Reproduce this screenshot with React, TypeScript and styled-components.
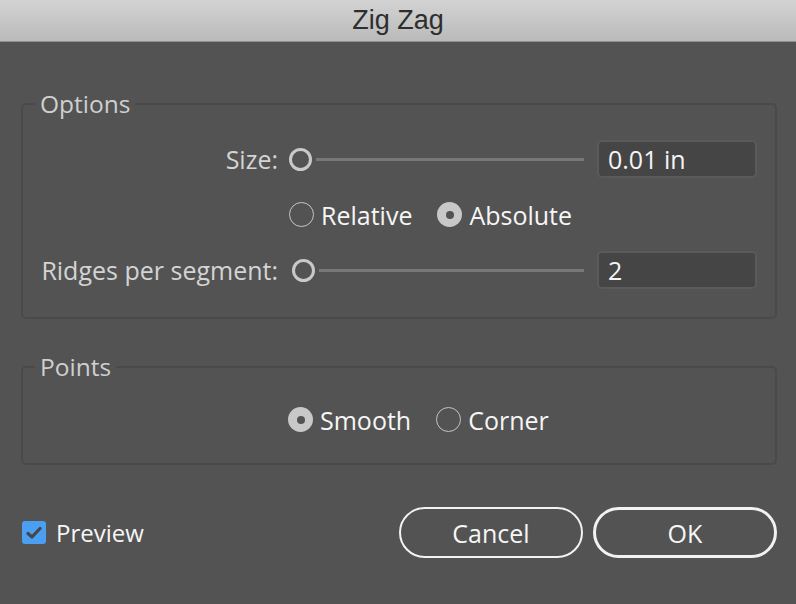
import React from "react";
import styled, { createGlobalStyle } from "styled-components";

const Global = createGlobalStyle`
  html, body { margin: 0; padding: 0; background: #535353; }
  * { box-sizing: border-box; }
`;

const Window = styled.div`
  width: 796px;
  height: 604px;
  display: flex;
  flex-direction: column;
  background: #535353;
  font-family: "Open Sans", "Noto Sans", sans-serif;
  overflow: hidden;
`;

const TitleBar = styled.div`
  height: 42px;
  flex: none;
  display: flex;
  align-items: center;
  justify-content: center;
  background: linear-gradient(#d3d3d3, #bababa);
  border-bottom: 1px solid #8f8f8f;
  font-family: "Liberation Sans", Arial, sans-serif;
  font-size: 27px;
  color: #2e2e2e;
  padding-bottom: 1px;
`;

const Body = styled.div`
  flex: 1;
  display: flex;
  flex-direction: column;
  padding: 0 19px 0 21px;
`;

const Group = styled.fieldset<{ $top: number; $pb: number }>`
  margin: ${(p) => p.$top}px 0 0 0;
  padding: 0 18px ${(p) => p.$pb}px 0;
  border: 2px solid #4a4a4a;
  border-radius: 5px;
  min-width: 0;
`;

const Legend = styled.legend`
  margin-left: 12px;
  padding: 0 5px;
  font-size: 24.5px;
  line-height: 26px;
  color: #cfcfcf;
`;

const Grid = styled.div`
  display: grid;
  grid-template-columns: 1fr 297px 160px;
  column-gap: 11px;
  row-gap: 24px;
  align-items: center;
  padding-top: 23px;
`;

const Label = styled.div`
  text-align: right;
  font-size: 25px;
  line-height: 30px;
  color: #d4d4d4;
`;

const SliderWrap = styled.div<{ $shift: number }>`
  display: flex;
  align-items: center;
  height: 24px;
  padding-left: ${(p) => p.$shift}px;
  padding-right: 2px;
`;

const Thumb = styled.div`
  width: 23px;
  height: 23px;
  border-radius: 50%;
  border: 3px solid #c9c9c9;
  flex: none;
`;

const Track = styled.div`
  flex: 1;
  height: 3px;
  margin-left: 4px;
  background: #787878;
`;

const Input = styled.div`
  height: 38px;
  border: 2px solid #5a5a5a;
  border-radius: 5px;
  background: #454545;
  color: #f4f4f4;
  font-size: 25px;
  display: flex;
  align-items: center;
  padding-left: 9px;
`;

const RadioRow = styled.div<{ $col: string }>`
  grid-column: ${(p) => p.$col};
  display: flex;
  align-items: center;
  gap: 25px;
  height: 25px;
`;

const RadioItem = styled.div`
  display: flex;
  align-items: center;
  gap: 7px;
  font-size: 25px;
  color: #f6f6f6;
`;

const RadioCircle = styled.div<{ $on: boolean }>`
  width: 25px;
  height: 25px;
  border-radius: 50%;
  flex: none;
  display: flex;
  align-items: center;
  justify-content: center;
  border: ${(p) => (p.$on ? "none" : "1.5px solid #c4c4c4")};
  background: ${(p) => (p.$on ? "#c8c8c8" : "transparent")};
  &::after {
    content: "";
    display: ${(p) => (p.$on ? "block" : "none")};
    width: 8px;
    height: 8px;
    border-radius: 50%;
    background: #535353;
  }
`;

const PointsRow = styled.div`
  display: flex;
  padding-left: 265px;
  padding-top: 27px;
`;

const Footer = styled.div`
  display: flex;
  align-items: center;
  margin-top: 42px;
`;

const Check = styled.div`
  width: 24px;
  height: 23px;
  border-radius: 3px;
  background: #4b9ff2;
  display: flex;
  align-items: center;
  justify-content: center;
  margin-left: 1px;
`;

const CheckLabel = styled.div`
  margin-left: 10px;
  font-size: 24px;
  color: #f6f6f6;
`;

const Spacer = styled.div`
  flex: 1;
`;

const Button = styled.div<{ $primary?: boolean }>`
  width: 184px;
  height: 51px;
  border-radius: 26px;
  border: ${(p) => (p.$primary ? "3px" : "2px")} solid #f2f2f2;
  color: #f6f6f6;
  font-size: 25px;
  display: flex;
  align-items: center;
  justify-content: center;
  margin-left: ${(p) => (p.$primary ? "10px" : "0")};
`;

const Radio = ({ on, label }: { on: boolean; label: string }) => (
  <RadioItem>
    <RadioCircle $on={on} />
    {label}
  </RadioItem>
);

export default function App() {
  return (
    <>
      <Global />
      <Window>
        <TitleBar>Zig Zag</TitleBar>
        <Body>
          <Group $top={49} $pb={28}>
            <Legend>Options</Legend>
            <Grid>
              <Label>Size:</Label>
              <SliderWrap $shift={0}>
                <Thumb />
                <Track />
              </SliderWrap>
              <Input>0.01 in</Input>
              <RadioRow $col="2 / 4">
                <Radio on={false} label="Relative" />
                <Radio on={true} label="Absolute" />
              </RadioRow>
              <Label>Ridges per segment:</Label>
              <SliderWrap $shift={3}>
                <Thumb />
                <Track />
              </SliderWrap>
              <Input>2</Input>
            </Grid>
          </Group>
          <Group $top={35} $pb={31}>
            <Legend>Points</Legend>
            <PointsRow>
              <RadioRow $col="auto">
                <Radio on={true} label="Smooth" />
                <Radio on={false} label="Corner" />
              </RadioRow>
            </PointsRow>
          </Group>
          <Footer>
            <Check>
              <svg width="16" height="14" viewBox="0 0 16 14">
                <path d="M2 7.5 L6 11 L14 2.5" fill="none" stroke="#464646" strokeWidth="3.2" strokeLinecap="round" strokeLinejoin="round" />
              </svg>
            </Check>
            <CheckLabel>Preview</CheckLabel>
            <Spacer />
            <Button>Cancel</Button>
            <Button $primary>OK</Button>
          </Footer>
        </Body>
      </Window>
    </>
  );
}
